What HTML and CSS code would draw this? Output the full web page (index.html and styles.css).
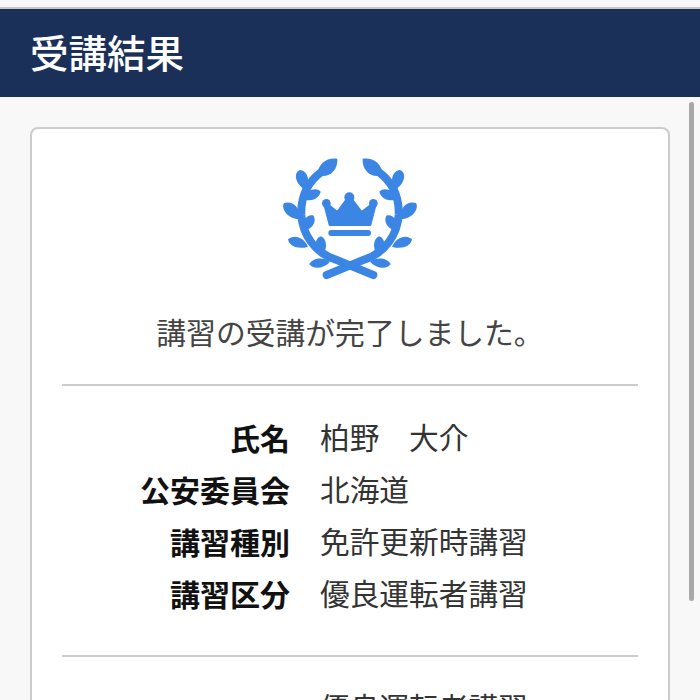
FILE: index.html
```html
<!DOCTYPE html>
<html lang="ja">
<head>
  <meta charset="UTF-8">
  <meta name="viewport" content="width=device-width, initial-scale=1.0">
  <title>受講結果</title>
  <link rel="stylesheet" href="styles.css">
</head>
<body>
  <div class="page">
    <header class="title-bar">
      <h1>受講結果</h1>
    </header>
    <main class="content">
      <div class="scroll-thumb"></div>
      <section class="card">
        <div class="badge">
          <svg class="wreath" viewBox="0 0 540 450" width="180" height="150" aria-hidden="true">
            <defs>
              <g id="branch">
                <path class="stem" d="M185 95 C140 128 122 175 124 225 C128 285 165 338 225 358 L340 405"/>
                <path d="M172 105 C174 70 200 52 232 56 C235 90 205 118 172 105Z"/>
                <path d="M136 150 C102 130 100 94 122 90 C146 96 150 125 136 150Z"/>
                <path d="M130 176 C138 148 170 140 182 155 C177 177 150 187 130 176Z"/>
                <path d="M120 238 C82 238 62 205 72 189 C98 180 124 205 120 238Z"/>
                <path d="M128 272 C122 245 142 220 161 227 C171 245 156 270 128 272Z"/>
                <path d="M144 320 C115 330 87 318 84 298 C100 282 132 290 144 320Z"/>
                <path d="M183 350 C160 328 164 293 183 289 C203 298 203 332 183 350Z"/>
                <path d="M210 365 C190 388 157 388 148 372 C158 352 192 350 210 365Z"/>
              </g>
            </defs>
            <use href="#branch"/>
            <use href="#branch" transform="translate(540 0) scale(-1 1)"/>
            <path class="crown" d="M209 255 L194 197 L205 194 L232 216 L260 178 L276 178 L305 216 L333 194 L346 197 L331 255Z"/>
            <circle cx="199" cy="190" r="13"/>
            <circle cx="268" cy="172" r="15"/>
            <circle cx="340" cy="190" r="13"/>
            <rect x="205" y="270" width="128" height="18" rx="9"/>
          </svg>
        </div>
        <p class="message">講習の受講が完了しました。</p>
        <dl class="details">
          <dt>氏名</dt><dd>柏野　大介</dd>
          <dt>公安委員会</dt><dd>北海道</dd>
          <dt>講習種別</dt><dd>免許更新時講習</dd>
          <dt>講習区分</dt><dd>優良運転者講習</dd>
        </dl>
        <dl class="details">
          <dt></dt><dd>優良運転者講習</dd>
        </dl>
      </section>
    </main>
  </div>
</body>
</html>
```

FILE: styles.css
```css
html, body {
  margin: 0;
  padding: 0;
  height: 700px;
  overflow: hidden;
}
body {
  font-family: "Noto Sans CJK JP", "Noto Sans", sans-serif;
  background: #f8f8f8;
  color: #333;
}
.page {
  height: 700px;
  padding-top: 7px;
  box-sizing: border-box;
  display: flex;
  flex-direction: column;
}
.title-bar {
  flex: none;
  display: flex;
  align-items: center;
  height: 84px;
  padding: 0 0 4px 30px;
  background: #1a3059;
  border-top: 2px solid #c8c8c8;
}
.title-bar h1 {
  margin: 0;
  font-size: 38.5px;
  font-weight: 500;
  line-height: 1;
  color: #fff;
}
.content {
  position: relative;
  flex: 1;
  overflow: hidden;
  padding: 30px 30px 0;
}
.scroll-thumb {
  position: absolute;
  top: 5px;
  right: 6px;
  width: 5px;
  height: 499px;
  border-radius: 3px;
  background: #a8a8a8;
}
.card {
  padding: 11px 30px 40px;
  background: #fff;
  border: 2px solid #ccc;
  border-radius: 8px;
}
.badge {
  display: flex;
  justify-content: center;
}
.wreath {
  fill: #3b86e5;
}
.wreath .stem {
  fill: none;
  stroke: #3b86e5;
  stroke-width: 24;
  stroke-linecap: round;
}
.wreath .crown {
  stroke: #3b86e5;
  stroke-width: 6;
  stroke-linejoin: round;
}
.message {
  margin: 19px 0 0;
  padding-bottom: 31px;
  font-size: 29.8px;
  line-height: 44px;
  text-align: center;
  color: #444;
  border-bottom: 2px solid #ccc;
}
.details {
  display: grid;
  grid-template-columns: 228px 1fr;
  column-gap: 30px;
  row-gap: 8px;
  margin: 0;
  padding: 29px 0 40px;
  border-bottom: 2px solid #ccc;
  font-size: 29.7px;
  line-height: 44px;
}
.details:last-child {
  padding-top: 28px;
  border-bottom: 0;
}
.details dt {
  font-size: 30px;
  font-weight: 700;
  text-align: right;
  color: #111;
}
.details dd {
  margin: 0;
}
```
